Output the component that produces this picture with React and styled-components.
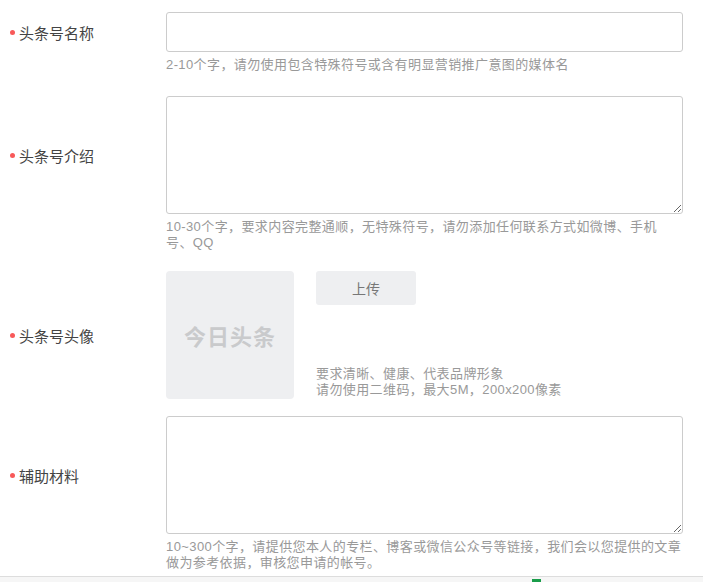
import React from "react";
import styled, { createGlobalStyle } from "styled-components";

const Global = createGlobalStyle`
  body { margin: 0; background: #fff; font-family: "Liberation Sans", Arial, "Noto Sans CJK SC", sans-serif; }
`;
const Page = styled.div`
  padding-top: 12px;
  height: 564px;
  overflow: hidden;
`;
const Row = styled.div`
  display: flex;
  margin-bottom: ${(p) => p.$gap}px;
`;
const Label = styled.div`
  flex: 0 0 156px;
  padding-left: 10px;
  height: ${(p) => p.$h}px;
  display: flex;
  align-items: center;
  font-size: 15px;
  color: #444;
`;
const Dot = styled.span`
  width: 5px; height: 5px; border-radius: 50%;
  background: #f85959; margin-right: 4px;
`;
const Field = styled.div`
  width: 517px;
`;
const Input = styled.input`
  box-sizing: border-box; width: 100%; height: 40px;
  border: 1px solid #ccc; border-radius: 3px; outline: none;
  display: block;
`;
const Area = styled.textarea`
  box-sizing: border-box; width: 100%; height: 118px;
  border: 1px solid #ccc; border-radius: 3px; outline: none;
  display: block; resize: vertical;
`;
const Hint = styled.div`
  margin-top: 5px;
  font-size: 13px; line-height: 16px; color: #999;
  letter-spacing: 0.4px;
`;
const AvatarWrap = styled.div`
  display: flex; gap: 22px;
`;
const Avatar = styled.div`
  width: 128px; height: 128px; background: #eeeff1; border-radius: 4px;
  display: flex; align-items: center; justify-content: center;
  color: #c9cacc; font-weight: bold; font-size: 22px; letter-spacing: 1px;
`;
const Side = styled.div`
  display: flex; flex-direction: column; justify-content: space-between;
  padding-bottom: 1px;
`;
const Upload = styled.button`
  width: 100px; height: 34px; border: none; border-radius: 3px;
  background: #eeeff1; color: #777; font-size: 14px; font-family: inherit;
`;
const SideHint = styled(Hint)`margin: 0;`;
const Footer = styled.div`
  height: 6px; border-top: 1px solid #ddd; background: #f6f6f6; position: relative;
`;
const Green = styled.div`
  position: absolute; left: 532px; top: 2px; width: 9px; height: 4px; background: #1a9d4a;
`;

export default function App() {
  return (
    <>
      <Global />
      <Page>
        <Row $gap={23}>
          <Label $h={40}><Dot />头条号名称</Label>
          <Field>
            <Input />
            <Hint>2-10个字，请勿使用包含特殊符号或含有明显营销推广意图的媒体名</Hint>
          </Field>
        </Row>
        <Row $gap={20}>
          <Label $h={118}><Dot />头条号介绍</Label>
          <Field>
            <Area />
            <Hint>10-30个字，要求内容完整通顺，无特殊符号，请勿添加任何联系方式如微博、手机号、QQ</Hint>
          </Field>
        </Row>
        <Row $gap={17}>
          <Label $h={128}><Dot />头条号头像</Label>
          <Field>
            <AvatarWrap>
              <Avatar>今日头条</Avatar>
              <Side>
                <Upload>上传</Upload>
                <SideHint>要求清晰、健康、代表品牌形象<br />请勿使用二维码，最大5M，200x200像素</SideHint>
              </Side>
            </AvatarWrap>
          </Field>
        </Row>
        <Row $gap={0}>
          <Label $h={118}><Dot />辅助材料</Label>
          <Field>
            <Area />
            <Hint>10~300个字，请提供您本人的专栏、博客或微信公众号等链接，我们会以您提供的文章做为参考依据，审核您申请的帐号。</Hint>
          </Field>
        </Row>
      </Page>
      <Footer><Green /></Footer>
    </>
  );
}
